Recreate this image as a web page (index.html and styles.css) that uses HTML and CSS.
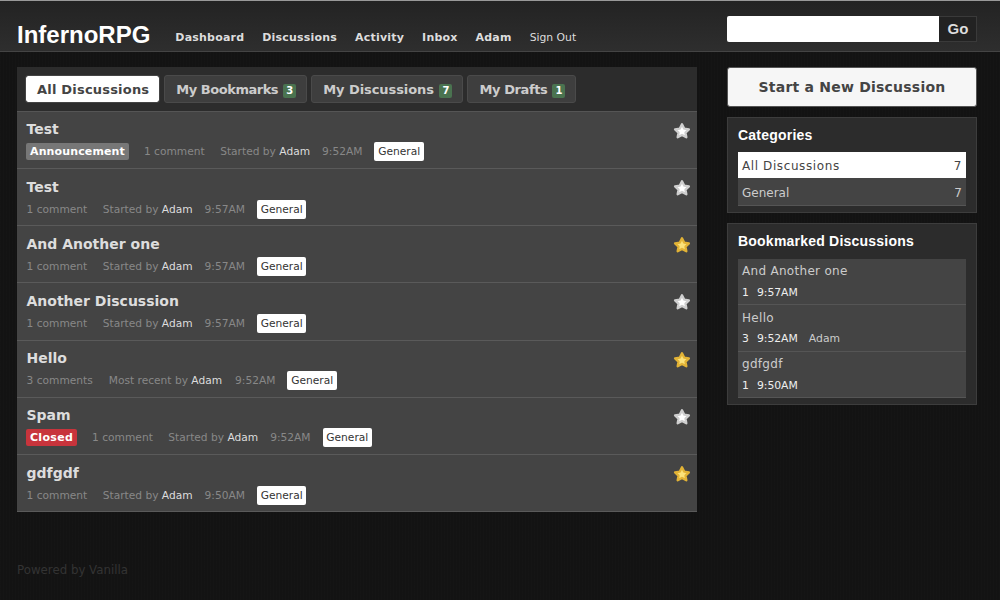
FILE: index.html
```html
<!DOCTYPE html>
<html lang="en">
<head>
  <meta charset="UTF-8">
  <title>InfernoRPG</title>
  <link rel="stylesheet" href="styles.css">
</head>
<body>
  <header class="head">
    <div class="head-left">
      <a class="logo">InfernoRPG</a>
      <nav class="menu">
        <a>Dashboard</a>
        <a>Discussions</a>
        <a>Activity</a>
        <a>Inbox</a>
        <a>Adam</a>
        <a class="signout">Sign Out</a>
      </nav>
    </div>
    <form class="search">
      <input type="text" class="search-input">
      <button type="button" class="search-go">Go</button>
    </form>
  </header>

  <div class="body-wrap">
    <main class="content">
      <div class="tabs">
        <a class="tab tab-all active">All Discussions</a>
        <a class="tab tab-bookmarks">My Bookmarks <span class="count">3</span></a>
        <a class="tab tab-mine">My Discussions <span class="count">7</span></a>
        <a class="tab tab-drafts">My Drafts <span class="count">1</span></a>
      </div>
      <ul class="discussions">
        <li class="item">
          <div class="title">Test</div>
          <div class="meta"><span class="tag tag-announce">Announcement</span><span class="comments">1 comment</span><span>Started by <b>Adam</b></span><span>9:52AM</span><span class="cat">General</span></div>
          <svg class="star" viewBox="0 0 20 20"><use href="#star-shape"/></svg>
        </li>
        <li class="item">
          <div class="title">Test</div>
          <div class="meta"><span class="comments">1 comment</span><span>Started by <b>Adam</b></span><span>9:57AM</span><span class="cat">General</span></div>
          <svg class="star" viewBox="0 0 20 20"><use href="#star-shape"/></svg>
        </li>
        <li class="item">
          <div class="title">And Another one</div>
          <div class="meta"><span class="comments">1 comment</span><span>Started by <b>Adam</b></span><span>9:57AM</span><span class="cat">General</span></div>
          <svg class="star on" viewBox="0 0 20 20"><use href="#star-shape"/></svg>
        </li>
        <li class="item">
          <div class="title">Another Discussion</div>
          <div class="meta"><span class="comments">1 comment</span><span>Started by <b>Adam</b></span><span>9:57AM</span><span class="cat">General</span></div>
          <svg class="star" viewBox="0 0 20 20"><use href="#star-shape"/></svg>
        </li>
        <li class="item">
          <div class="title">Hello</div>
          <div class="meta"><span class="comments">3 comments</span><span class="recent">Most recent by <b>Adam</b></span><span>9:52AM</span><span class="cat">General</span></div>
          <svg class="star on" viewBox="0 0 20 20"><use href="#star-shape"/></svg>
        </li>
        <li class="item">
          <div class="title">Spam</div>
          <div class="meta"><span class="tag tag-closed">Closed</span><span class="comments">1 comment</span><span>Started by <b>Adam</b></span><span>9:52AM</span><span class="cat">General</span></div>
          <svg class="star" viewBox="0 0 20 20"><use href="#star-shape"/></svg>
        </li>
        <li class="item">
          <div class="title">gdfgdf</div>
          <div class="meta"><span class="comments">1 comment</span><span>Started by <b>Adam</b></span><span>9:50AM</span><span class="cat">General</span></div>
          <svg class="star on" viewBox="0 0 20 20"><use href="#star-shape"/></svg>
        </li>
      </ul>
    </main>

    <aside class="panel">
      <a class="new-discussion">Start a New Discussion</a>

      <section class="box">
        <h4>Categories</h4>
        <ul class="cat-list">
          <li class="cat-row active"><span>All Discussions</span><span>7</span></li>
          <li class="cat-row"><span>General</span><span>7</span></li>
        </ul>
      </section>

      <section class="box">
        <h4>Bookmarked Discussions</h4>
        <ul class="bookmarks">
          <li class="bm bm-first">
            <div class="bm-title">And Another one</div>
            <div class="bm-meta"><span>1</span><span>9:57AM</span></div>
          </li>
          <li class="bm">
            <div class="bm-title">Hello</div>
            <div class="bm-meta"><span>3</span><span>9:52AM</span><span class="bm-user">Adam</span></div>
          </li>
          <li class="bm bm-last">
            <div class="bm-title">gdfgdf</div>
            <div class="bm-meta"><span>1</span><span>9:50AM</span></div>
          </li>
        </ul>
      </section>
    </aside>
  </div>

  <footer class="foot">Powered by Vanilla</footer>

  <svg class="defs" width="0" height="0">
    <symbol id="star-shape" viewBox="0 0 20 20">
      <path d="M10 2.5l2.4 4.8 5.3.8-3.8 3.7.9 5.2-4.8-2.5-4.8 2.5.9-5.2-3.8-3.7 5.3-.8z"/>
    </symbol>
  </svg>
</body>
</html>
```

FILE: styles.css
```css
* {
  box-sizing: border-box;
}
html, body {
  margin: 0;
  padding: 0;
}
body {
  background-color: #131313;
  background-image: repeating-linear-gradient(90deg, rgba(255, 255, 255, 0.008) 0 1px, transparent 1px 3px);
  color: #ddd;
  font-family: "DejaVu Sans", sans-serif;
  font-size: 11px;
  height: 600px;
  overflow: hidden;
}
ul {
  list-style: none;
  margin: 0;
  padding: 0;
}

/* header */
.head {
  height: 52px;
  display: flex;
  justify-content: space-between;
  padding: 15px 23px 0 17px;
  background: linear-gradient(#232323, #2e2e2e);
  border-top: 1px solid #999;
  border-bottom: 1px solid #444;
}
.head-left {
  display: flex;
  align-items: flex-start;
  height: 35px;
}
.logo {
  font-family: "Liberation Sans", sans-serif;
  font-weight: bold;
  font-size: 24px;
  line-height: 28px;
  margin-top: 5px;
  color: #fff;
  margin-right: 25px;
}
.menu {
  display: flex;
  gap: 18px;
  margin-top: 15px;
  line-height: 14px;
  font-weight: bold;
  font-size: 11px;
  letter-spacing: 0.2px;
  color: #ddd;
}
.signout {
  font-weight: normal;
  font-size: 10.8px;
  letter-spacing: 0;
}
.search {
  display: flex;
  margin: 0;
  height: 26px;
}
.search-input {
  width: 212px;
  height: 26px;
  border: 0;
  background: #fff;
  border-radius: 2px 0 0 2px;
  padding: 0;
}
.search-go {
  width: 38px;
  height: 26px;
  background: #222;
  border: 1px solid #3a3a3a;
  border-left: 0;
  color: #ddd;
  font-family: "Liberation Sans", sans-serif;
  font-weight: bold;
  font-size: 15px;
  padding: 0 0 1px 1px;
}

/* layout */
.body-wrap {
  display: flex;
  align-items: flex-start;
  gap: 30px;
  padding: 15px 23px 0 17px;
}
.content {
  width: 680px;
  flex: none;
  background: #2c2c2c;
}
.panel {
  width: 250px;
  flex: none;
}

/* tabs */
.tabs {
  display: flex;
  gap: 4px;
  height: 44px;
  padding: 8px 8px 0;
}
.tab {
  height: 28px;
  line-height: 27px;
  padding: 0 10px 0 11px;
  background: #3e3e3e;
  border: 1px solid #4a4a4a;
  border-radius: 3px;
  color: #ccc;
  font-weight: bold;
  font-size: 13px;
  white-space: nowrap;
}
.tab.active {
  background: #fff;
  background-clip: padding-box;
  border-color: #444;
  color: #444;
}
.tab-all {
  letter-spacing: 0.2px;
}
.tab-bookmarks {
  letter-spacing: -0.47px;
}
.tab-mine {
  letter-spacing: -0.07px;
}
.tab-drafts {
  letter-spacing: -0.4px;
}
.count {
  display: inline-block;
  background: #4a7350;
  color: #fff;
  font-size: 10px;
  line-height: 14px;
  height: 14px;
  width: 13px;
  text-align: center;
  letter-spacing: 0;
  border-radius: 2px;
  margin-left: 1px;
  vertical-align: 0;
}

/* discussion rows */
.discussions {
  border-top: 1px solid #555;
}
.item {
  position: relative;
  height: 57.17px;
  padding: 7.49px 9px 0;
  background: #444;
  border-bottom: 1px solid #5a5a5a;
}
.item:last-child {
  padding-top: 7.6px;
}
.title {
  font-size: 14px;
  font-weight: bold;
  line-height: 20px;
  padding-left: 0.5px;
  color: #ddd;
}
.meta {
  display: flex;
  align-items: center;
  gap: 12px;
  height: 21px;
  margin-top: 2px;
  padding-left: 0.5px;
  font-size: 10.65px;
  color: #888;
}
.meta b {
  font-weight: normal;
  color: #ddd;
}
.comments {
  margin-right: 3.5px;
}
.recent {
  margin-left: 0.5px;
  margin-right: 1px;
}
.tag {
  font-size: 11px;
  font-weight: bold;
  letter-spacing: 0.13px;
  color: #fff;
  height: 17px;
  line-height: 17px;
  padding: 0 4px;
  border-radius: 2px;
  margin-left: -0.5px;
  margin-right: 3px;
}
.tag-announce {
  background: #777;
}
.tag-closed {
  background: #c8343c;
  letter-spacing: 0.3px;
}
.cat {
  background: #fff;
  color: #333;
  height: 19px;
  line-height: 19px;
  padding: 0 3.8px;
  border-radius: 2px;
}
.star {
  position: absolute;
  top: 10px;
  right: 6px;
  width: 18px;
  height: 18px;
  fill: #fff;
  stroke: #cfcfcf;
  stroke-width: 2.6;
  stroke-linejoin: round;
}
.star.on {
  fill: #fbe27a;
  stroke: #e2b336;
}

/* sidebar */
.new-discussion {
  display: block;
  height: 40px;
  line-height: 39px;
  text-align: center;
  background: #f6f6f6;
  border: 1px solid #555;
  border-radius: 3px;
  color: #444;
  font-weight: bold;
  font-size: 14px;
  letter-spacing: 0.22px;
  margin-bottom: 10px;
}
.box {
  background: #2c2c2c;
  border: 1px solid #3d3d3d;
  padding: 0 10px 6px;
  margin-bottom: 10px;
}
.box h4 {
  margin: 0;
  height: 34px;
  line-height: 35px;
  font-family: "Liberation Sans", sans-serif;
  font-size: 14px;
  font-weight: bold;
  letter-spacing: 0.22px;
  color: #fff;
}
.cat-row {
  display: flex;
  justify-content: space-between;
  height: 28px;
  line-height: 26px;
  padding: 2px 4px 0;
  background: #444;
  border-bottom: 1px solid #555;
  font-size: 12px;
  color: #ccc;
}
.cat-row.active {
  height: 26px;
  padding-top: 1px;
  background: #fff;
  border-bottom: 0;
  color: #444;
  letter-spacing: 0.6px;
}
.bookmarks {
  margin-top: 1px;
}
.bm {
  height: 47px;
  padding: 2px 4px 0;
  background: #444;
  border-top: 1px solid #555;
}
.bm-first {
  height: 45px;
  padding-top: 1px;
  border-top: 0;
}
.bm-last {
  padding-top: 1px;
  border-bottom: 1px solid #555;
}
.bm-title {
  font-size: 12px;
  letter-spacing: 0.3px;
  line-height: 22px;
  color: #ccc;
}
.bm-first .bm-title,
.bm-last .bm-title {
  margin-bottom: 1px;
}
.bm-meta {
  display: flex;
  gap: 8px;
  font-size: 10.8px;
  line-height: 20px;
  color: #eee;
}
.bm-user {
  margin-left: 3px;
  color: #ccc;
}

/* footer */
.foot {
  position: absolute;
  left: 17px;
  top: 563px;
  font-size: 11.8px;
  color: #333;
}
.defs {
  position: absolute;
}
```
